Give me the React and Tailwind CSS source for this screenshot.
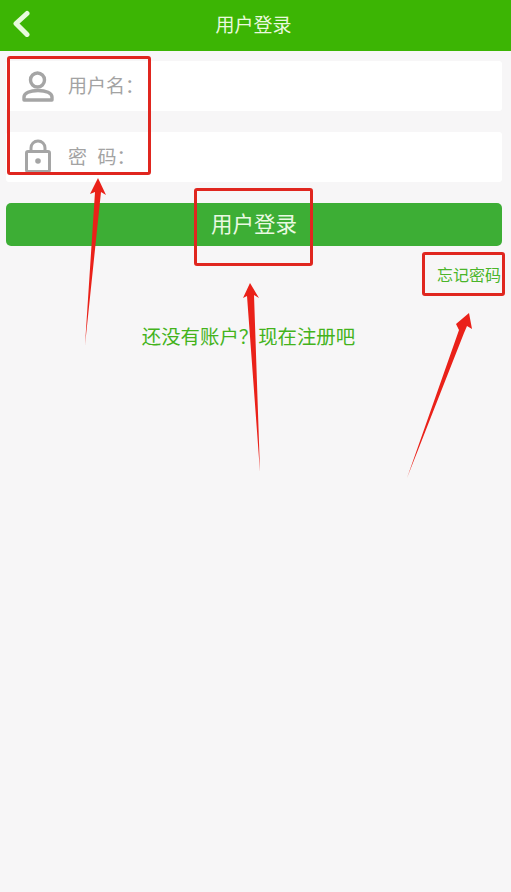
const font = { fontFamily: '"Noto Sans CJK SC", "Liberation Sans", sans-serif' };

const Field = ({ icon, label }) => (
  <div className="flex h-[50px] items-center rounded-[3px] bg-white pl-[16px]">
    <div className="flex w-[46px] justify-start">{icon}</div>
    <span className="pb-[4px] text-[19px] leading-none whitespace-pre text-[#a3a3a3] [word-spacing:1px]">{label}</span>
  </div>
);

const UserIcon = () => (
  <svg width="32" height="34" viewBox="0 0 32 34" fill="none" stroke="#a5a5a5" strokeWidth="3.4">
    <circle cx="15.5" cy="11" r="7" />
    <path d="M2 31v-3c0-4 6-6.5 14-6.5s14 2.5 14 6.5v3z" strokeLinejoin="round" />
  </svg>
);

const LockIcon = () => (
  <svg className="mb-[3px] ml-[3px]" width="26" height="34" viewBox="0 0 26 34" fill="none" stroke="#a5a5a5" strokeWidth="3">
    <path d="M6 14V9c0-4 3-7 7-7s7 3 7 7v5" />
    <rect x="1.5" y="12.5" width="23" height="20" rx="1.5" />
    <circle cx="13" cy="22" r="2.8" fill="#a5a5a5" stroke="none" />
  </svg>
);

const Callout = ({ className }) => (
  <div className={`absolute rounded-[3px] border-[3px] border-[#e0261f] ${className}`} />
);

export default function App() {
  return (
    <div className="relative min-h-[892px] w-full overflow-hidden bg-[#f7f6f7]" style={font}>
      <header className="relative flex h-[51px] items-center justify-center bg-[#3cb504] pb-[4px] pr-[4px]">
        <svg className="absolute left-[11px] top-[9px]" width="20" height="28" viewBox="0 0 20 28" fill="none">
          <path d="M16 4.5 5 14.5l11 11" stroke="#e8fadd" strokeWidth="5" strokeLinecap="round" strokeLinejoin="round" />
        </svg>
        <h1 className="text-[19px] leading-none text-[#e9f9df]">用户登录</h1>
      </header>

      <div className="flex flex-col gap-[21px] px-[6px] pt-[10px] pr-[9px]">
        <Field icon={<UserIcon />} label={"用户名\uFF1A"} />
        <Field icon={<LockIcon />} label={"密\u00A0\u00A0码\uFF1A"} />
      </div>

      <div className="px-[6px] pt-[21px] pr-[9px]">
        <button className="flex h-[43px] w-full items-center justify-center rounded-[5px] bg-[#3dae35] pb-[4px] text-[21.5px] leading-none text-[#eaf9e2]">
          用户登录
        </button>
      </div>

      <div className="flex justify-end pr-[10px] pt-[20px]">
        <a className="text-[16px] leading-[16px] text-[#4bb52a]">忘记密码</a>
      </div>

      <p className="pt-[44px] pr-[14px] text-center text-[19.4px] leading-[20px] text-[#44b31c]">{"还没有账户\uFF1F现在注册吧"}</p>

      <Callout className="left-[7px] top-[56px] h-[119px] w-[144px]" />
      <Callout className="left-[194px] top-[188px] h-[78px] w-[119px]" />
      <Callout className="left-[422px] top-[252px] h-[44px] w-[83px]" />

      <svg className="pointer-events-none absolute left-0 top-0" width="511" height="892" fill="#ea2119">
        <path d="M85 345 95 192 90 194 98 178 106 195 101 192Z" />
        <path d="M260 472 247 296 243 298 250 283 259 298 254 295Z" />
        <path d="M407 478 459 330 456 324 469 313 472 329 467 326 464 333Z" />
      </svg>
    </div>
  );
}
